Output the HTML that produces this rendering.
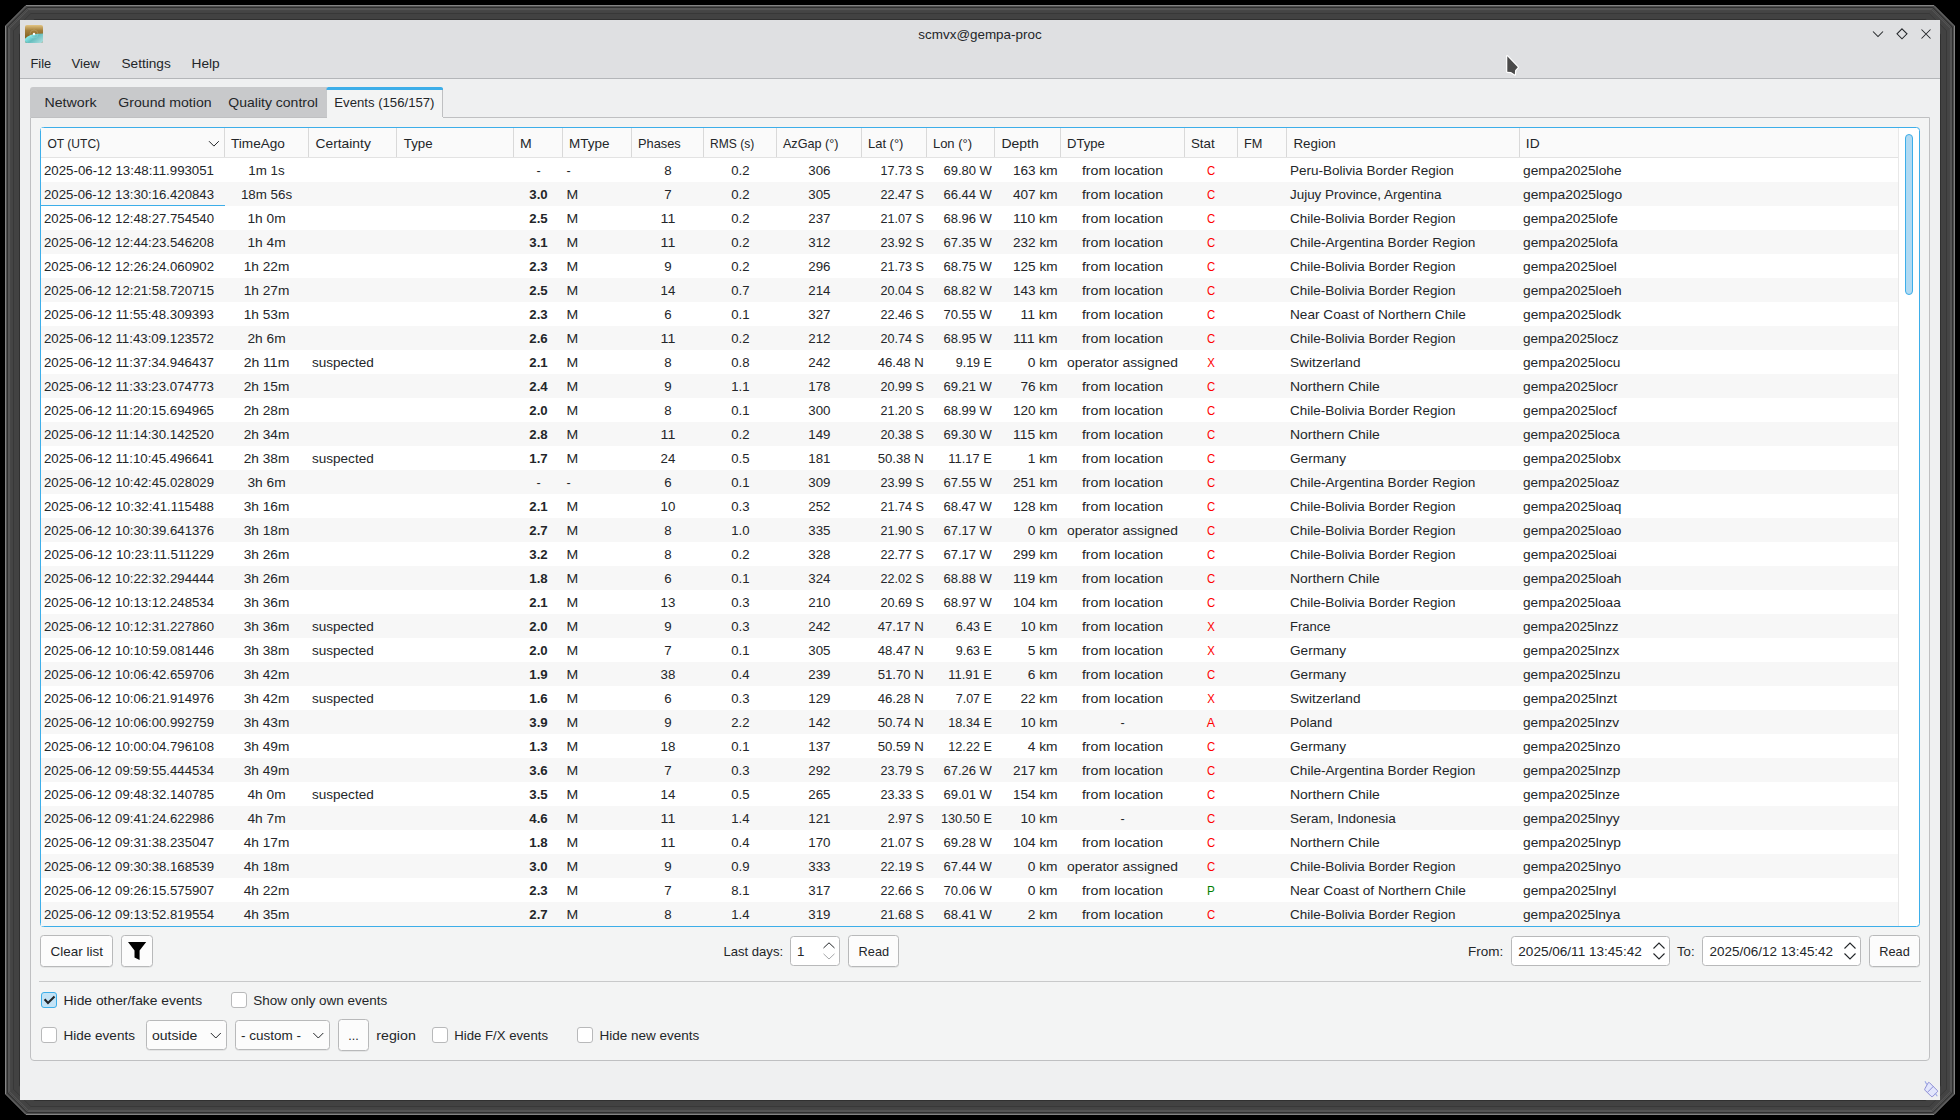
<!DOCTYPE html>
<html><head><meta charset="utf-8"><title>scmvx@gempa-proc</title>
<style>
html,body{margin:0;padding:0;background:#000;width:1960px;height:1120px;overflow:hidden}
svg{display:block;font-family:"Liberation Sans",sans-serif;font-size:13.3px;fill:#232629}
</style></head><body>
<svg width="1960" height="1120" viewBox="0 0 1960 1120">
<path d="M5.5,26.00 L26.00,5.5 L1934.00,5.5 L1954.5,26.00 L1954.5,1094.00 L1934.00,1114.5 L26.00,1114.5 L5.5,1094.00 Z" fill="#424242" stroke="#848484" stroke-width="1"/>
<path d="M6.5,26.59 L26.59,6.5 L1933.41,6.5 L1953.5,26.59 L1953.5,1093.41 L1933.41,1113.5 L26.59,1113.5 L6.5,1093.41 Z" fill="none" stroke="#505050" stroke-width="1"/>
<path d="M7.5,27.18 L27.18,7.5 L1932.82,7.5 L1952.5,27.18 L1952.5,1092.82 L1932.82,1112.5 L27.18,1112.5 L7.5,1092.82 Z" fill="none" stroke="#303030" stroke-width="1"/>
<path d="M8.5,27.77 L27.77,8.5 L1932.23,8.5 L1951.5,27.77 L1951.5,1092.23 L1932.23,1111.5 L27.77,1111.5 L8.5,1092.23 Z" fill="none" stroke="#555555" stroke-width="1"/>
<path d="M9.5,28.36 L28.36,9.5 L1931.64,9.5 L1950.5,28.36 L1950.5,1091.64 L1931.64,1110.5 L28.36,1110.5 L9.5,1091.64 Z" fill="none" stroke="#555555" stroke-width="1"/>
<path d="M10.5,28.95 L28.95,10.5 L1931.05,10.5 L1949.5,28.95 L1949.5,1091.05 L1931.05,1109.5 L28.95,1109.5 L10.5,1091.05 Z" fill="none" stroke="#464646" stroke-width="1"/>
<path d="M11.5,29.54 L29.54,11.5 L1930.46,11.5 L1948.5,29.54 L1948.5,1090.46 L1930.46,1108.5 L29.54,1108.5 L11.5,1090.46 Z" fill="none" stroke="#454545" stroke-width="1"/>
<path d="M12.5,30.13 L30.13,12.5 L1929.87,12.5 L1947.5,30.13 L1947.5,1089.87 L1929.87,1107.5 L30.13,1107.5 L12.5,1089.87 Z" fill="none" stroke="#444444" stroke-width="1"/>
<path d="M13.5,30.72 L30.72,13.5 L1929.28,13.5 L1946.5,30.72 L1946.5,1089.28 L1929.28,1106.5 L30.72,1106.5 L13.5,1089.28 Z" fill="none" stroke="#383838" stroke-width="1"/>
<path d="M19.5,34.26 L34.26,19.5 L1925.74,19.5 L1940.5,34.26 L1940.5,1085.74 L1925.74,1100.5 L34.26,1100.5 L19.5,1085.74 Z" fill="none" stroke="#303030" stroke-width="1"/>
<rect x="20" y="20" width="1920" height="1080" fill="#eff0f1"/>
<rect x="20" y="20" width="1920" height="58" fill="#dfe0e2"/>
<line x1="20" y1="78.5" x2="1940" y2="78.5" stroke="#b4b6b9" stroke-width="1"/>
<defs>
<linearGradient id="ib" x1="0" y1="0" x2="0" y2="1"><stop offset="0" stop-color="#e2c484"/><stop offset="0.3" stop-color="#a4803c"/><stop offset="0.6" stop-color="#8a6828"/><stop offset="1" stop-color="#7a5a20"/></linearGradient>
<linearGradient id="it" x1="0" y1="0.3" x2="1" y2="1"><stop offset="0" stop-color="#96ffff"/><stop offset="0.45" stop-color="#66bebe"/><stop offset="1" stop-color="#b4e2e2"/></linearGradient>
<clipPath id="ic"><rect x="25" y="25" width="18" height="18" rx="2"/></clipPath>
</defs>
<g clip-path="url(#ic)"><rect x="25" y="25" width="18" height="18" fill="url(#ib)"/><path d="M25,38.8 C28,35.8 31,34.6 35,34.1 L43,33.4 L43,43 L25,43 Z" fill="url(#it)"/><circle cx="34" cy="34" r="4" fill="none" stroke="#ffffff" stroke-opacity="0.25" stroke-width="0.6"/><circle cx="34" cy="34" r="1.2" fill="#fff"/></g>
<text x="980.0" y="39" text-anchor="middle" textLength="123.3" lengthAdjust="spacingAndGlyphs">scmvx@gempa-proc</text>
<path d="M1873,31.5 L1878,36.5 L1883,31.5" fill="none" stroke="#232629" stroke-width="1.05"/>
<path d="M1902,28.8 L1907,33.8 L1902,38.8 L1897,33.8 Z" fill="none" stroke="#232629" stroke-width="1.05"/>
<path d="M1921.5,29.5 L1930.5,38.5 M1930.5,29.5 L1921.5,38.5" fill="none" stroke="#232629" stroke-width="1.05"/>
<text x="30.5" y="68" textLength="20.7" lengthAdjust="spacingAndGlyphs">File</text>
<text x="71.5" y="68" textLength="28.3" lengthAdjust="spacingAndGlyphs">View</text>
<text x="121.5" y="68" textLength="49.2" lengthAdjust="spacingAndGlyphs">Settings</text>
<text x="191.5" y="68" textLength="28.2" lengthAdjust="spacingAndGlyphs">Help</text>
<path d="M30,117 L30,90 Q30,87 33,87 L327,87 L327,117 Z" fill="#c8c9cb"/>
<path d="M30.5,117.5 L1929.5,117.5 L1929.5,1057 Q1929.5,1060.5 1926,1060.5 L34,1060.5 Q30.5,1060.5 30.5,1057 Z" fill="#f3f4f4" stroke="#bfc0c2" stroke-width="1"/>
<rect x="327" y="87" width="116" height="31" fill="#f3f4f4"/>
<line x1="442.5" y1="88" x2="442.5" y2="117" stroke="#bfc0c2" stroke-width="1"/>
<path d="M326.5,90 L326.5,89 Q326.5,87 328.5,87 L441,87 Q443,87 443,89 L443,90 Z" fill="#3daee9"/>
<text x="44.5" y="107" textLength="52.0" lengthAdjust="spacingAndGlyphs">Network</text>
<text x="118.3" y="107" textLength="93.3" lengthAdjust="spacingAndGlyphs">Ground motion</text>
<text x="228.3" y="107" textLength="89.6" lengthAdjust="spacingAndGlyphs">Quality control</text>
<text x="334.3" y="107" textLength="100.2" lengthAdjust="spacingAndGlyphs">Events (156/157)</text>
<rect x="40.5" y="127.5" width="1879" height="799" fill="#ffffff" stroke="#3daee9" stroke-width="1" rx="3"/>
<rect x="41" y="128" width="1857" height="29" fill="#fafafa"/>
<line x1="41" y1="157.5" x2="1898" y2="157.5" stroke="#e3e3e3" stroke-width="1"/>
<line x1="224.5" y1="128" x2="224.5" y2="157" stroke="#d9d9d9" stroke-width="1"/>
<line x1="308.5" y1="128" x2="308.5" y2="157" stroke="#d9d9d9" stroke-width="1"/>
<line x1="396.5" y1="128" x2="396.5" y2="157" stroke="#d9d9d9" stroke-width="1"/>
<line x1="513.5" y1="128" x2="513.5" y2="157" stroke="#d9d9d9" stroke-width="1"/>
<line x1="562.5" y1="128" x2="562.5" y2="157" stroke="#d9d9d9" stroke-width="1"/>
<line x1="631.5" y1="128" x2="631.5" y2="157" stroke="#d9d9d9" stroke-width="1"/>
<line x1="703.5" y1="128" x2="703.5" y2="157" stroke="#d9d9d9" stroke-width="1"/>
<line x1="776.5" y1="128" x2="776.5" y2="157" stroke="#d9d9d9" stroke-width="1"/>
<line x1="861.5" y1="128" x2="861.5" y2="157" stroke="#d9d9d9" stroke-width="1"/>
<line x1="926.5" y1="128" x2="926.5" y2="157" stroke="#d9d9d9" stroke-width="1"/>
<line x1="994.5" y1="128" x2="994.5" y2="157" stroke="#d9d9d9" stroke-width="1"/>
<line x1="1060.5" y1="128" x2="1060.5" y2="157" stroke="#d9d9d9" stroke-width="1"/>
<line x1="1184.5" y1="128" x2="1184.5" y2="157" stroke="#d9d9d9" stroke-width="1"/>
<line x1="1237.5" y1="128" x2="1237.5" y2="157" stroke="#d9d9d9" stroke-width="1"/>
<line x1="1286.5" y1="128" x2="1286.5" y2="157" stroke="#d9d9d9" stroke-width="1"/>
<line x1="1519.5" y1="128" x2="1519.5" y2="157" stroke="#d9d9d9" stroke-width="1"/>
<line x1="1898.5" y1="128" x2="1898.5" y2="926" stroke="#e8e8e8" stroke-width="1"/>
<text x="47.5" y="148" textLength="52.6" lengthAdjust="spacingAndGlyphs">OT (UTC)</text>
<text x="231.0" y="148" textLength="53.9" lengthAdjust="spacingAndGlyphs">TimeAgo</text>
<text x="315.5" y="148" textLength="55.3" lengthAdjust="spacingAndGlyphs">Certainty</text>
<text x="403.8" y="148" textLength="28.8" lengthAdjust="spacingAndGlyphs">Type</text>
<text x="520.0" y="148" textLength="11.7" lengthAdjust="spacingAndGlyphs">M</text>
<text x="569.0" y="148" textLength="40.5" lengthAdjust="spacingAndGlyphs">MType</text>
<text x="638.0" y="148" textLength="42.7" lengthAdjust="spacingAndGlyphs">Phases</text>
<text x="710.0" y="148" textLength="44.2" lengthAdjust="spacingAndGlyphs">RMS (s)</text>
<text x="782.9" y="148" textLength="55.6" lengthAdjust="spacingAndGlyphs">AzGap (°)</text>
<text x="868.0" y="148" textLength="35.4" lengthAdjust="spacingAndGlyphs">Lat (°)</text>
<text x="932.9" y="148" textLength="39.2" lengthAdjust="spacingAndGlyphs">Lon (°)</text>
<text x="1001.4" y="148" textLength="37.3" lengthAdjust="spacingAndGlyphs">Depth</text>
<text x="1067.0" y="148" textLength="37.8" lengthAdjust="spacingAndGlyphs">DType</text>
<text x="1190.9" y="148" textLength="23.7" lengthAdjust="spacingAndGlyphs">Stat</text>
<text x="1244.0" y="148" textLength="18.4" lengthAdjust="spacingAndGlyphs">FM</text>
<text x="1293.4" y="148" textLength="42.4" lengthAdjust="spacingAndGlyphs">Region</text>
<text x="1525.8" y="148" textLength="13.8" lengthAdjust="spacingAndGlyphs">ID</text>
<path d="M209,141.2 L213.9,146.1 L218.8,141.2" fill="none" stroke="#232629" stroke-width="1.0"/>
<rect x="41" y="182" width="1857" height="24" fill="#f7f7f7"/>
<rect x="41" y="230" width="1857" height="24" fill="#f7f7f7"/>
<rect x="41" y="278" width="1857" height="24" fill="#f7f7f7"/>
<rect x="41" y="326" width="1857" height="24" fill="#f7f7f7"/>
<rect x="41" y="374" width="1857" height="24" fill="#f7f7f7"/>
<rect x="41" y="422" width="1857" height="24" fill="#f7f7f7"/>
<rect x="41" y="470" width="1857" height="24" fill="#f7f7f7"/>
<rect x="41" y="518" width="1857" height="24" fill="#f7f7f7"/>
<rect x="41" y="566" width="1857" height="24" fill="#f7f7f7"/>
<rect x="41" y="614" width="1857" height="24" fill="#f7f7f7"/>
<rect x="41" y="662" width="1857" height="24" fill="#f7f7f7"/>
<rect x="41" y="710" width="1857" height="24" fill="#f7f7f7"/>
<rect x="41" y="758" width="1857" height="24" fill="#f7f7f7"/>
<rect x="41" y="806" width="1857" height="24" fill="#f7f7f7"/>
<rect x="41" y="854" width="1857" height="24" fill="#f7f7f7"/>
<rect x="41" y="902" width="1857" height="24" fill="#f7f7f7"/>
<text x="44.0" y="175" textLength="170.0" lengthAdjust="spacingAndGlyphs">2025-06-12 13:48:11.993051</text>
<text x="266.5" y="175" text-anchor="middle" textLength="36.4" lengthAdjust="spacingAndGlyphs">1m 1s</text>
<text x="538.5" y="175" text-anchor="middle" textLength="4.2" lengthAdjust="spacingAndGlyphs">-</text>
<text x="566.5" y="175" textLength="4.2" lengthAdjust="spacingAndGlyphs">-</text>
<text x="668.0" y="175" text-anchor="middle" textLength="7.4" lengthAdjust="spacingAndGlyphs">8</text>
<text x="740.4" y="175" text-anchor="middle" textLength="18.3" lengthAdjust="spacingAndGlyphs">0.2</text>
<text x="819.4" y="175" text-anchor="middle" textLength="22.2" lengthAdjust="spacingAndGlyphs">306</text>
<text x="923.9" y="175" text-anchor="end" textLength="43.5" lengthAdjust="spacingAndGlyphs">17.73 S</text>
<text x="991.9" y="175" text-anchor="end" textLength="48.4" lengthAdjust="spacingAndGlyphs">69.80 W</text>
<text x="1057.5" y="175" text-anchor="end" textLength="44.5" lengthAdjust="spacingAndGlyphs">163 km</text>
<text x="1122.5" y="175" text-anchor="middle" textLength="81.2" lengthAdjust="spacingAndGlyphs">from location</text>
<text x="1211.0" y="175" text-anchor="middle" fill="#ff0000" textLength="8.2" lengthAdjust="spacingAndGlyphs">C</text>
<text x="1290.0" y="175" textLength="163.7" lengthAdjust="spacingAndGlyphs">Peru-Bolivia Border Region</text>
<text x="1523.0" y="175" textLength="98.6" lengthAdjust="spacingAndGlyphs">gempa2025lohe</text>
<text x="44.0" y="199" textLength="170.0" lengthAdjust="spacingAndGlyphs">2025-06-12 13:30:16.420843</text>
<text x="266.5" y="199" text-anchor="middle" textLength="51.2" lengthAdjust="spacingAndGlyphs">18m 56s</text>
<text x="538.5" y="199" text-anchor="middle" font-weight="bold" textLength="18.4" lengthAdjust="spacingAndGlyphs">3.0</text>
<text x="566.5" y="199" textLength="11.7" lengthAdjust="spacingAndGlyphs">M</text>
<text x="668.0" y="199" text-anchor="middle" textLength="7.4" lengthAdjust="spacingAndGlyphs">7</text>
<text x="740.4" y="199" text-anchor="middle" textLength="18.3" lengthAdjust="spacingAndGlyphs">0.2</text>
<text x="819.4" y="199" text-anchor="middle" textLength="22.2" lengthAdjust="spacingAndGlyphs">305</text>
<text x="923.9" y="199" text-anchor="end" textLength="43.5" lengthAdjust="spacingAndGlyphs">22.47 S</text>
<text x="991.9" y="199" text-anchor="end" textLength="48.4" lengthAdjust="spacingAndGlyphs">66.44 W</text>
<text x="1057.5" y="199" text-anchor="end" textLength="44.5" lengthAdjust="spacingAndGlyphs">407 km</text>
<text x="1122.5" y="199" text-anchor="middle" textLength="81.2" lengthAdjust="spacingAndGlyphs">from location</text>
<text x="1211.0" y="199" text-anchor="middle" fill="#ff0000" textLength="8.2" lengthAdjust="spacingAndGlyphs">C</text>
<text x="1290.0" y="199" textLength="151.4" lengthAdjust="spacingAndGlyphs">Jujuy Province, Argentina</text>
<text x="1523.0" y="199" textLength="99.1" lengthAdjust="spacingAndGlyphs">gempa2025logo</text>
<text x="44.0" y="223" textLength="170.0" lengthAdjust="spacingAndGlyphs">2025-06-12 12:48:27.754540</text>
<text x="266.5" y="223" text-anchor="middle" textLength="38.2" lengthAdjust="spacingAndGlyphs">1h 0m</text>
<text x="538.5" y="223" text-anchor="middle" font-weight="bold" textLength="18.4" lengthAdjust="spacingAndGlyphs">2.5</text>
<text x="566.5" y="223" textLength="11.7" lengthAdjust="spacingAndGlyphs">M</text>
<text x="668.0" y="223" text-anchor="middle" textLength="14.8" lengthAdjust="spacingAndGlyphs">11</text>
<text x="740.4" y="223" text-anchor="middle" textLength="18.3" lengthAdjust="spacingAndGlyphs">0.2</text>
<text x="819.4" y="223" text-anchor="middle" textLength="22.2" lengthAdjust="spacingAndGlyphs">237</text>
<text x="923.9" y="223" text-anchor="end" textLength="43.5" lengthAdjust="spacingAndGlyphs">21.07 S</text>
<text x="991.9" y="223" text-anchor="end" textLength="48.4" lengthAdjust="spacingAndGlyphs">68.96 W</text>
<text x="1057.5" y="223" text-anchor="end" textLength="44.5" lengthAdjust="spacingAndGlyphs">110 km</text>
<text x="1122.5" y="223" text-anchor="middle" textLength="81.2" lengthAdjust="spacingAndGlyphs">from location</text>
<text x="1211.0" y="223" text-anchor="middle" fill="#ff0000" textLength="8.2" lengthAdjust="spacingAndGlyphs">C</text>
<text x="1290.0" y="223" textLength="165.4" lengthAdjust="spacingAndGlyphs">Chile-Bolivia Border Region</text>
<text x="1523.0" y="223" textLength="95.0" lengthAdjust="spacingAndGlyphs">gempa2025lofe</text>
<text x="44.0" y="247" textLength="170.0" lengthAdjust="spacingAndGlyphs">2025-06-12 12:44:23.546208</text>
<text x="266.5" y="247" text-anchor="middle" textLength="38.2" lengthAdjust="spacingAndGlyphs">1h 4m</text>
<text x="538.5" y="247" text-anchor="middle" font-weight="bold" textLength="18.4" lengthAdjust="spacingAndGlyphs">3.1</text>
<text x="566.5" y="247" textLength="11.7" lengthAdjust="spacingAndGlyphs">M</text>
<text x="668.0" y="247" text-anchor="middle" textLength="14.8" lengthAdjust="spacingAndGlyphs">11</text>
<text x="740.4" y="247" text-anchor="middle" textLength="18.3" lengthAdjust="spacingAndGlyphs">0.2</text>
<text x="819.4" y="247" text-anchor="middle" textLength="22.2" lengthAdjust="spacingAndGlyphs">312</text>
<text x="923.9" y="247" text-anchor="end" textLength="43.5" lengthAdjust="spacingAndGlyphs">23.92 S</text>
<text x="991.9" y="247" text-anchor="end" textLength="48.4" lengthAdjust="spacingAndGlyphs">67.35 W</text>
<text x="1057.5" y="247" text-anchor="end" textLength="44.5" lengthAdjust="spacingAndGlyphs">232 km</text>
<text x="1122.5" y="247" text-anchor="middle" textLength="81.2" lengthAdjust="spacingAndGlyphs">from location</text>
<text x="1211.0" y="247" text-anchor="middle" fill="#ff0000" textLength="8.2" lengthAdjust="spacingAndGlyphs">C</text>
<text x="1290.0" y="247" textLength="185.3" lengthAdjust="spacingAndGlyphs">Chile-Argentina Border Region</text>
<text x="1523.0" y="247" textLength="95.0" lengthAdjust="spacingAndGlyphs">gempa2025lofa</text>
<text x="44.0" y="271" textLength="170.0" lengthAdjust="spacingAndGlyphs">2025-06-12 12:26:24.060902</text>
<text x="266.5" y="271" text-anchor="middle" textLength="45.6" lengthAdjust="spacingAndGlyphs">1h 22m</text>
<text x="538.5" y="271" text-anchor="middle" font-weight="bold" textLength="18.4" lengthAdjust="spacingAndGlyphs">2.3</text>
<text x="566.5" y="271" textLength="11.7" lengthAdjust="spacingAndGlyphs">M</text>
<text x="668.0" y="271" text-anchor="middle" textLength="7.4" lengthAdjust="spacingAndGlyphs">9</text>
<text x="740.4" y="271" text-anchor="middle" textLength="18.3" lengthAdjust="spacingAndGlyphs">0.2</text>
<text x="819.4" y="271" text-anchor="middle" textLength="22.2" lengthAdjust="spacingAndGlyphs">296</text>
<text x="923.9" y="271" text-anchor="end" textLength="43.5" lengthAdjust="spacingAndGlyphs">21.73 S</text>
<text x="991.9" y="271" text-anchor="end" textLength="48.4" lengthAdjust="spacingAndGlyphs">68.75 W</text>
<text x="1057.5" y="271" text-anchor="end" textLength="44.5" lengthAdjust="spacingAndGlyphs">125 km</text>
<text x="1122.5" y="271" text-anchor="middle" textLength="81.2" lengthAdjust="spacingAndGlyphs">from location</text>
<text x="1211.0" y="271" text-anchor="middle" fill="#ff0000" textLength="8.2" lengthAdjust="spacingAndGlyphs">C</text>
<text x="1290.0" y="271" textLength="165.4" lengthAdjust="spacingAndGlyphs">Chile-Bolivia Border Region</text>
<text x="1523.0" y="271" textLength="93.9" lengthAdjust="spacingAndGlyphs">gempa2025loel</text>
<text x="44.0" y="295" textLength="170.0" lengthAdjust="spacingAndGlyphs">2025-06-12 12:21:58.720715</text>
<text x="266.5" y="295" text-anchor="middle" textLength="45.6" lengthAdjust="spacingAndGlyphs">1h 27m</text>
<text x="538.5" y="295" text-anchor="middle" font-weight="bold" textLength="18.4" lengthAdjust="spacingAndGlyphs">2.5</text>
<text x="566.5" y="295" textLength="11.7" lengthAdjust="spacingAndGlyphs">M</text>
<text x="668.0" y="295" text-anchor="middle" textLength="14.8" lengthAdjust="spacingAndGlyphs">14</text>
<text x="740.4" y="295" text-anchor="middle" textLength="18.3" lengthAdjust="spacingAndGlyphs">0.7</text>
<text x="819.4" y="295" text-anchor="middle" textLength="22.2" lengthAdjust="spacingAndGlyphs">214</text>
<text x="923.9" y="295" text-anchor="end" textLength="43.5" lengthAdjust="spacingAndGlyphs">20.04 S</text>
<text x="991.9" y="295" text-anchor="end" textLength="48.4" lengthAdjust="spacingAndGlyphs">68.82 W</text>
<text x="1057.5" y="295" text-anchor="end" textLength="44.5" lengthAdjust="spacingAndGlyphs">143 km</text>
<text x="1122.5" y="295" text-anchor="middle" textLength="81.2" lengthAdjust="spacingAndGlyphs">from location</text>
<text x="1211.0" y="295" text-anchor="middle" fill="#ff0000" textLength="8.2" lengthAdjust="spacingAndGlyphs">C</text>
<text x="1290.0" y="295" textLength="165.4" lengthAdjust="spacingAndGlyphs">Chile-Bolivia Border Region</text>
<text x="1523.0" y="295" textLength="98.6" lengthAdjust="spacingAndGlyphs">gempa2025loeh</text>
<text x="44.0" y="319" textLength="170.0" lengthAdjust="spacingAndGlyphs">2025-06-12 11:55:48.309393</text>
<text x="266.5" y="319" text-anchor="middle" textLength="45.6" lengthAdjust="spacingAndGlyphs">1h 53m</text>
<text x="538.5" y="319" text-anchor="middle" font-weight="bold" textLength="18.4" lengthAdjust="spacingAndGlyphs">2.3</text>
<text x="566.5" y="319" textLength="11.7" lengthAdjust="spacingAndGlyphs">M</text>
<text x="668.0" y="319" text-anchor="middle" textLength="7.4" lengthAdjust="spacingAndGlyphs">6</text>
<text x="740.4" y="319" text-anchor="middle" textLength="18.3" lengthAdjust="spacingAndGlyphs">0.1</text>
<text x="819.4" y="319" text-anchor="middle" textLength="22.2" lengthAdjust="spacingAndGlyphs">327</text>
<text x="923.9" y="319" text-anchor="end" textLength="43.5" lengthAdjust="spacingAndGlyphs">22.46 S</text>
<text x="991.9" y="319" text-anchor="end" textLength="48.4" lengthAdjust="spacingAndGlyphs">70.55 W</text>
<text x="1057.5" y="319" text-anchor="end" textLength="37.1" lengthAdjust="spacingAndGlyphs">11 km</text>
<text x="1122.5" y="319" text-anchor="middle" textLength="81.2" lengthAdjust="spacingAndGlyphs">from location</text>
<text x="1211.0" y="319" text-anchor="middle" fill="#ff0000" textLength="8.2" lengthAdjust="spacingAndGlyphs">C</text>
<text x="1290.0" y="319" textLength="175.9" lengthAdjust="spacingAndGlyphs">Near Coast of Northern Chile</text>
<text x="1523.0" y="319" textLength="98.1" lengthAdjust="spacingAndGlyphs">gempa2025lodk</text>
<text x="44.0" y="343" textLength="170.0" lengthAdjust="spacingAndGlyphs">2025-06-12 11:43:09.123572</text>
<text x="266.5" y="343" text-anchor="middle" textLength="38.2" lengthAdjust="spacingAndGlyphs">2h 6m</text>
<text x="538.5" y="343" text-anchor="middle" font-weight="bold" textLength="18.4" lengthAdjust="spacingAndGlyphs">2.6</text>
<text x="566.5" y="343" textLength="11.7" lengthAdjust="spacingAndGlyphs">M</text>
<text x="668.0" y="343" text-anchor="middle" textLength="14.8" lengthAdjust="spacingAndGlyphs">11</text>
<text x="740.4" y="343" text-anchor="middle" textLength="18.3" lengthAdjust="spacingAndGlyphs">0.2</text>
<text x="819.4" y="343" text-anchor="middle" textLength="22.2" lengthAdjust="spacingAndGlyphs">212</text>
<text x="923.9" y="343" text-anchor="end" textLength="43.5" lengthAdjust="spacingAndGlyphs">20.74 S</text>
<text x="991.9" y="343" text-anchor="end" textLength="48.4" lengthAdjust="spacingAndGlyphs">68.95 W</text>
<text x="1057.5" y="343" text-anchor="end" textLength="44.5" lengthAdjust="spacingAndGlyphs">111 km</text>
<text x="1122.5" y="343" text-anchor="middle" textLength="81.2" lengthAdjust="spacingAndGlyphs">from location</text>
<text x="1211.0" y="343" text-anchor="middle" fill="#ff0000" textLength="8.2" lengthAdjust="spacingAndGlyphs">C</text>
<text x="1290.0" y="343" textLength="165.4" lengthAdjust="spacingAndGlyphs">Chile-Bolivia Border Region</text>
<text x="1523.0" y="343" textLength="95.6" lengthAdjust="spacingAndGlyphs">gempa2025locz</text>
<text x="44.0" y="367" textLength="170.0" lengthAdjust="spacingAndGlyphs">2025-06-12 11:37:34.946437</text>
<text x="266.5" y="367" text-anchor="middle" textLength="45.6" lengthAdjust="spacingAndGlyphs">2h 11m</text>
<text x="312.0" y="367" textLength="61.7" lengthAdjust="spacingAndGlyphs">suspected</text>
<text x="538.5" y="367" text-anchor="middle" font-weight="bold" textLength="18.4" lengthAdjust="spacingAndGlyphs">2.1</text>
<text x="566.5" y="367" textLength="11.7" lengthAdjust="spacingAndGlyphs">M</text>
<text x="668.0" y="367" text-anchor="middle" textLength="7.4" lengthAdjust="spacingAndGlyphs">8</text>
<text x="740.4" y="367" text-anchor="middle" textLength="18.3" lengthAdjust="spacingAndGlyphs">0.8</text>
<text x="819.4" y="367" text-anchor="middle" textLength="22.2" lengthAdjust="spacingAndGlyphs">242</text>
<text x="923.9" y="367" text-anchor="end" textLength="46.2" lengthAdjust="spacingAndGlyphs">46.48 N</text>
<text x="991.9" y="367" text-anchor="end" textLength="36.2" lengthAdjust="spacingAndGlyphs">9.19 E</text>
<text x="1057.5" y="367" text-anchor="end" textLength="29.8" lengthAdjust="spacingAndGlyphs">0 km</text>
<text x="1122.5" y="367" text-anchor="middle" textLength="110.8" lengthAdjust="spacingAndGlyphs">operator assigned</text>
<text x="1211.0" y="367" text-anchor="middle" fill="#ff0000" textLength="7.6" lengthAdjust="spacingAndGlyphs">X</text>
<text x="1290.0" y="367" textLength="70.5" lengthAdjust="spacingAndGlyphs">Switzerland</text>
<text x="1523.0" y="367" textLength="97.5" lengthAdjust="spacingAndGlyphs">gempa2025locu</text>
<text x="44.0" y="391" textLength="170.0" lengthAdjust="spacingAndGlyphs">2025-06-12 11:33:23.074773</text>
<text x="266.5" y="391" text-anchor="middle" textLength="45.6" lengthAdjust="spacingAndGlyphs">2h 15m</text>
<text x="538.5" y="391" text-anchor="middle" font-weight="bold" textLength="18.4" lengthAdjust="spacingAndGlyphs">2.4</text>
<text x="566.5" y="391" textLength="11.7" lengthAdjust="spacingAndGlyphs">M</text>
<text x="668.0" y="391" text-anchor="middle" textLength="7.4" lengthAdjust="spacingAndGlyphs">9</text>
<text x="740.4" y="391" text-anchor="middle" textLength="18.3" lengthAdjust="spacingAndGlyphs">1.1</text>
<text x="819.4" y="391" text-anchor="middle" textLength="22.2" lengthAdjust="spacingAndGlyphs">178</text>
<text x="923.9" y="391" text-anchor="end" textLength="43.5" lengthAdjust="spacingAndGlyphs">20.99 S</text>
<text x="991.9" y="391" text-anchor="end" textLength="48.4" lengthAdjust="spacingAndGlyphs">69.21 W</text>
<text x="1057.5" y="391" text-anchor="end" textLength="37.1" lengthAdjust="spacingAndGlyphs">76 km</text>
<text x="1122.5" y="391" text-anchor="middle" textLength="81.2" lengthAdjust="spacingAndGlyphs">from location</text>
<text x="1211.0" y="391" text-anchor="middle" fill="#ff0000" textLength="8.2" lengthAdjust="spacingAndGlyphs">C</text>
<text x="1290.0" y="391" textLength="89.8" lengthAdjust="spacingAndGlyphs">Northern Chile</text>
<text x="1523.0" y="391" textLength="94.8" lengthAdjust="spacingAndGlyphs">gempa2025locr</text>
<text x="44.0" y="415" textLength="170.0" lengthAdjust="spacingAndGlyphs">2025-06-12 11:20:15.694965</text>
<text x="266.5" y="415" text-anchor="middle" textLength="45.6" lengthAdjust="spacingAndGlyphs">2h 28m</text>
<text x="538.5" y="415" text-anchor="middle" font-weight="bold" textLength="18.4" lengthAdjust="spacingAndGlyphs">2.0</text>
<text x="566.5" y="415" textLength="11.7" lengthAdjust="spacingAndGlyphs">M</text>
<text x="668.0" y="415" text-anchor="middle" textLength="7.4" lengthAdjust="spacingAndGlyphs">8</text>
<text x="740.4" y="415" text-anchor="middle" textLength="18.3" lengthAdjust="spacingAndGlyphs">0.1</text>
<text x="819.4" y="415" text-anchor="middle" textLength="22.2" lengthAdjust="spacingAndGlyphs">300</text>
<text x="923.9" y="415" text-anchor="end" textLength="43.5" lengthAdjust="spacingAndGlyphs">21.20 S</text>
<text x="991.9" y="415" text-anchor="end" textLength="48.4" lengthAdjust="spacingAndGlyphs">68.99 W</text>
<text x="1057.5" y="415" text-anchor="end" textLength="44.5" lengthAdjust="spacingAndGlyphs">120 km</text>
<text x="1122.5" y="415" text-anchor="middle" textLength="81.2" lengthAdjust="spacingAndGlyphs">from location</text>
<text x="1211.0" y="415" text-anchor="middle" fill="#ff0000" textLength="8.2" lengthAdjust="spacingAndGlyphs">C</text>
<text x="1290.0" y="415" textLength="165.4" lengthAdjust="spacingAndGlyphs">Chile-Bolivia Border Region</text>
<text x="1523.0" y="415" textLength="93.9" lengthAdjust="spacingAndGlyphs">gempa2025locf</text>
<text x="44.0" y="439" textLength="170.0" lengthAdjust="spacingAndGlyphs">2025-06-12 11:14:30.142520</text>
<text x="266.5" y="439" text-anchor="middle" textLength="45.6" lengthAdjust="spacingAndGlyphs">2h 34m</text>
<text x="538.5" y="439" text-anchor="middle" font-weight="bold" textLength="18.4" lengthAdjust="spacingAndGlyphs">2.8</text>
<text x="566.5" y="439" textLength="11.7" lengthAdjust="spacingAndGlyphs">M</text>
<text x="668.0" y="439" text-anchor="middle" textLength="14.8" lengthAdjust="spacingAndGlyphs">11</text>
<text x="740.4" y="439" text-anchor="middle" textLength="18.3" lengthAdjust="spacingAndGlyphs">0.2</text>
<text x="819.4" y="439" text-anchor="middle" textLength="22.2" lengthAdjust="spacingAndGlyphs">149</text>
<text x="923.9" y="439" text-anchor="end" textLength="43.5" lengthAdjust="spacingAndGlyphs">20.38 S</text>
<text x="991.9" y="439" text-anchor="end" textLength="48.4" lengthAdjust="spacingAndGlyphs">69.30 W</text>
<text x="1057.5" y="439" text-anchor="end" textLength="44.5" lengthAdjust="spacingAndGlyphs">115 km</text>
<text x="1122.5" y="439" text-anchor="middle" textLength="81.2" lengthAdjust="spacingAndGlyphs">from location</text>
<text x="1211.0" y="439" text-anchor="middle" fill="#ff0000" textLength="8.2" lengthAdjust="spacingAndGlyphs">C</text>
<text x="1290.0" y="439" textLength="89.8" lengthAdjust="spacingAndGlyphs">Northern Chile</text>
<text x="1523.0" y="439" textLength="96.7" lengthAdjust="spacingAndGlyphs">gempa2025loca</text>
<text x="44.0" y="463" textLength="170.0" lengthAdjust="spacingAndGlyphs">2025-06-12 11:10:45.496641</text>
<text x="266.5" y="463" text-anchor="middle" textLength="45.6" lengthAdjust="spacingAndGlyphs">2h 38m</text>
<text x="312.0" y="463" textLength="61.7" lengthAdjust="spacingAndGlyphs">suspected</text>
<text x="538.5" y="463" text-anchor="middle" font-weight="bold" textLength="18.4" lengthAdjust="spacingAndGlyphs">1.7</text>
<text x="566.5" y="463" textLength="11.7" lengthAdjust="spacingAndGlyphs">M</text>
<text x="668.0" y="463" text-anchor="middle" textLength="14.8" lengthAdjust="spacingAndGlyphs">24</text>
<text x="740.4" y="463" text-anchor="middle" textLength="18.3" lengthAdjust="spacingAndGlyphs">0.5</text>
<text x="819.4" y="463" text-anchor="middle" textLength="22.2" lengthAdjust="spacingAndGlyphs">181</text>
<text x="923.9" y="463" text-anchor="end" textLength="46.2" lengthAdjust="spacingAndGlyphs">50.38 N</text>
<text x="991.9" y="463" text-anchor="end" textLength="43.6" lengthAdjust="spacingAndGlyphs">11.17 E</text>
<text x="1057.5" y="463" text-anchor="end" textLength="29.8" lengthAdjust="spacingAndGlyphs">1 km</text>
<text x="1122.5" y="463" text-anchor="middle" textLength="81.2" lengthAdjust="spacingAndGlyphs">from location</text>
<text x="1211.0" y="463" text-anchor="middle" fill="#ff0000" textLength="8.2" lengthAdjust="spacingAndGlyphs">C</text>
<text x="1290.0" y="463" textLength="56.0" lengthAdjust="spacingAndGlyphs">Germany</text>
<text x="1523.0" y="463" textLength="97.8" lengthAdjust="spacingAndGlyphs">gempa2025lobx</text>
<text x="44.0" y="487" textLength="170.0" lengthAdjust="spacingAndGlyphs">2025-06-12 10:42:45.028029</text>
<text x="266.5" y="487" text-anchor="middle" textLength="38.2" lengthAdjust="spacingAndGlyphs">3h 6m</text>
<text x="538.5" y="487" text-anchor="middle" textLength="4.2" lengthAdjust="spacingAndGlyphs">-</text>
<text x="566.5" y="487" textLength="4.2" lengthAdjust="spacingAndGlyphs">-</text>
<text x="668.0" y="487" text-anchor="middle" textLength="7.4" lengthAdjust="spacingAndGlyphs">6</text>
<text x="740.4" y="487" text-anchor="middle" textLength="18.3" lengthAdjust="spacingAndGlyphs">0.1</text>
<text x="819.4" y="487" text-anchor="middle" textLength="22.2" lengthAdjust="spacingAndGlyphs">309</text>
<text x="923.9" y="487" text-anchor="end" textLength="43.5" lengthAdjust="spacingAndGlyphs">23.99 S</text>
<text x="991.9" y="487" text-anchor="end" textLength="48.4" lengthAdjust="spacingAndGlyphs">67.55 W</text>
<text x="1057.5" y="487" text-anchor="end" textLength="44.5" lengthAdjust="spacingAndGlyphs">251 km</text>
<text x="1122.5" y="487" text-anchor="middle" textLength="81.2" lengthAdjust="spacingAndGlyphs">from location</text>
<text x="1211.0" y="487" text-anchor="middle" fill="#ff0000" textLength="8.2" lengthAdjust="spacingAndGlyphs">C</text>
<text x="1290.0" y="487" textLength="185.3" lengthAdjust="spacingAndGlyphs">Chile-Argentina Border Region</text>
<text x="1523.0" y="487" textLength="96.6" lengthAdjust="spacingAndGlyphs">gempa2025loaz</text>
<text x="44.0" y="511" textLength="170.0" lengthAdjust="spacingAndGlyphs">2025-06-12 10:32:41.115488</text>
<text x="266.5" y="511" text-anchor="middle" textLength="45.6" lengthAdjust="spacingAndGlyphs">3h 16m</text>
<text x="538.5" y="511" text-anchor="middle" font-weight="bold" textLength="18.4" lengthAdjust="spacingAndGlyphs">2.1</text>
<text x="566.5" y="511" textLength="11.7" lengthAdjust="spacingAndGlyphs">M</text>
<text x="668.0" y="511" text-anchor="middle" textLength="14.8" lengthAdjust="spacingAndGlyphs">10</text>
<text x="740.4" y="511" text-anchor="middle" textLength="18.3" lengthAdjust="spacingAndGlyphs">0.3</text>
<text x="819.4" y="511" text-anchor="middle" textLength="22.2" lengthAdjust="spacingAndGlyphs">252</text>
<text x="923.9" y="511" text-anchor="end" textLength="43.5" lengthAdjust="spacingAndGlyphs">21.74 S</text>
<text x="991.9" y="511" text-anchor="end" textLength="48.4" lengthAdjust="spacingAndGlyphs">68.47 W</text>
<text x="1057.5" y="511" text-anchor="end" textLength="44.5" lengthAdjust="spacingAndGlyphs">128 km</text>
<text x="1122.5" y="511" text-anchor="middle" textLength="81.2" lengthAdjust="spacingAndGlyphs">from location</text>
<text x="1211.0" y="511" text-anchor="middle" fill="#ff0000" textLength="8.2" lengthAdjust="spacingAndGlyphs">C</text>
<text x="1290.0" y="511" textLength="165.4" lengthAdjust="spacingAndGlyphs">Chile-Bolivia Border Region</text>
<text x="1523.0" y="511" textLength="98.5" lengthAdjust="spacingAndGlyphs">gempa2025loaq</text>
<text x="44.0" y="535" textLength="170.0" lengthAdjust="spacingAndGlyphs">2025-06-12 10:30:39.641376</text>
<text x="266.5" y="535" text-anchor="middle" textLength="45.6" lengthAdjust="spacingAndGlyphs">3h 18m</text>
<text x="538.5" y="535" text-anchor="middle" font-weight="bold" textLength="18.4" lengthAdjust="spacingAndGlyphs">2.7</text>
<text x="566.5" y="535" textLength="11.7" lengthAdjust="spacingAndGlyphs">M</text>
<text x="668.0" y="535" text-anchor="middle" textLength="7.4" lengthAdjust="spacingAndGlyphs">8</text>
<text x="740.4" y="535" text-anchor="middle" textLength="18.3" lengthAdjust="spacingAndGlyphs">1.0</text>
<text x="819.4" y="535" text-anchor="middle" textLength="22.2" lengthAdjust="spacingAndGlyphs">335</text>
<text x="923.9" y="535" text-anchor="end" textLength="43.5" lengthAdjust="spacingAndGlyphs">21.90 S</text>
<text x="991.9" y="535" text-anchor="end" textLength="48.4" lengthAdjust="spacingAndGlyphs">67.17 W</text>
<text x="1057.5" y="535" text-anchor="end" textLength="29.8" lengthAdjust="spacingAndGlyphs">0 km</text>
<text x="1122.5" y="535" text-anchor="middle" textLength="110.8" lengthAdjust="spacingAndGlyphs">operator assigned</text>
<text x="1211.0" y="535" text-anchor="middle" fill="#ff0000" textLength="8.2" lengthAdjust="spacingAndGlyphs">C</text>
<text x="1290.0" y="535" textLength="165.4" lengthAdjust="spacingAndGlyphs">Chile-Bolivia Border Region</text>
<text x="1523.0" y="535" textLength="98.4" lengthAdjust="spacingAndGlyphs">gempa2025loao</text>
<text x="44.0" y="559" textLength="170.0" lengthAdjust="spacingAndGlyphs">2025-06-12 10:23:11.511229</text>
<text x="266.5" y="559" text-anchor="middle" textLength="45.6" lengthAdjust="spacingAndGlyphs">3h 26m</text>
<text x="538.5" y="559" text-anchor="middle" font-weight="bold" textLength="18.4" lengthAdjust="spacingAndGlyphs">3.2</text>
<text x="566.5" y="559" textLength="11.7" lengthAdjust="spacingAndGlyphs">M</text>
<text x="668.0" y="559" text-anchor="middle" textLength="7.4" lengthAdjust="spacingAndGlyphs">8</text>
<text x="740.4" y="559" text-anchor="middle" textLength="18.3" lengthAdjust="spacingAndGlyphs">0.2</text>
<text x="819.4" y="559" text-anchor="middle" textLength="22.2" lengthAdjust="spacingAndGlyphs">328</text>
<text x="923.9" y="559" text-anchor="end" textLength="43.5" lengthAdjust="spacingAndGlyphs">22.77 S</text>
<text x="991.9" y="559" text-anchor="end" textLength="48.4" lengthAdjust="spacingAndGlyphs">67.17 W</text>
<text x="1057.5" y="559" text-anchor="end" textLength="44.5" lengthAdjust="spacingAndGlyphs">299 km</text>
<text x="1122.5" y="559" text-anchor="middle" textLength="81.2" lengthAdjust="spacingAndGlyphs">from location</text>
<text x="1211.0" y="559" text-anchor="middle" fill="#ff0000" textLength="8.2" lengthAdjust="spacingAndGlyphs">C</text>
<text x="1290.0" y="559" textLength="165.4" lengthAdjust="spacingAndGlyphs">Chile-Bolivia Border Region</text>
<text x="1523.0" y="559" textLength="93.9" lengthAdjust="spacingAndGlyphs">gempa2025loai</text>
<text x="44.0" y="583" textLength="170.0" lengthAdjust="spacingAndGlyphs">2025-06-12 10:22:32.294444</text>
<text x="266.5" y="583" text-anchor="middle" textLength="45.6" lengthAdjust="spacingAndGlyphs">3h 26m</text>
<text x="538.5" y="583" text-anchor="middle" font-weight="bold" textLength="18.4" lengthAdjust="spacingAndGlyphs">1.8</text>
<text x="566.5" y="583" textLength="11.7" lengthAdjust="spacingAndGlyphs">M</text>
<text x="668.0" y="583" text-anchor="middle" textLength="7.4" lengthAdjust="spacingAndGlyphs">6</text>
<text x="740.4" y="583" text-anchor="middle" textLength="18.3" lengthAdjust="spacingAndGlyphs">0.1</text>
<text x="819.4" y="583" text-anchor="middle" textLength="22.2" lengthAdjust="spacingAndGlyphs">324</text>
<text x="923.9" y="583" text-anchor="end" textLength="43.5" lengthAdjust="spacingAndGlyphs">22.02 S</text>
<text x="991.9" y="583" text-anchor="end" textLength="48.4" lengthAdjust="spacingAndGlyphs">68.88 W</text>
<text x="1057.5" y="583" text-anchor="end" textLength="44.5" lengthAdjust="spacingAndGlyphs">119 km</text>
<text x="1122.5" y="583" text-anchor="middle" textLength="81.2" lengthAdjust="spacingAndGlyphs">from location</text>
<text x="1211.0" y="583" text-anchor="middle" fill="#ff0000" textLength="8.2" lengthAdjust="spacingAndGlyphs">C</text>
<text x="1290.0" y="583" textLength="89.8" lengthAdjust="spacingAndGlyphs">Northern Chile</text>
<text x="1523.0" y="583" textLength="98.5" lengthAdjust="spacingAndGlyphs">gempa2025loah</text>
<text x="44.0" y="607" textLength="170.0" lengthAdjust="spacingAndGlyphs">2025-06-12 10:13:12.248534</text>
<text x="266.5" y="607" text-anchor="middle" textLength="45.6" lengthAdjust="spacingAndGlyphs">3h 36m</text>
<text x="538.5" y="607" text-anchor="middle" font-weight="bold" textLength="18.4" lengthAdjust="spacingAndGlyphs">2.1</text>
<text x="566.5" y="607" textLength="11.7" lengthAdjust="spacingAndGlyphs">M</text>
<text x="668.0" y="607" text-anchor="middle" textLength="14.8" lengthAdjust="spacingAndGlyphs">13</text>
<text x="740.4" y="607" text-anchor="middle" textLength="18.3" lengthAdjust="spacingAndGlyphs">0.3</text>
<text x="819.4" y="607" text-anchor="middle" textLength="22.2" lengthAdjust="spacingAndGlyphs">210</text>
<text x="923.9" y="607" text-anchor="end" textLength="43.5" lengthAdjust="spacingAndGlyphs">20.69 S</text>
<text x="991.9" y="607" text-anchor="end" textLength="48.4" lengthAdjust="spacingAndGlyphs">68.97 W</text>
<text x="1057.5" y="607" text-anchor="end" textLength="44.5" lengthAdjust="spacingAndGlyphs">104 km</text>
<text x="1122.5" y="607" text-anchor="middle" textLength="81.2" lengthAdjust="spacingAndGlyphs">from location</text>
<text x="1211.0" y="607" text-anchor="middle" fill="#ff0000" textLength="8.2" lengthAdjust="spacingAndGlyphs">C</text>
<text x="1290.0" y="607" textLength="165.4" lengthAdjust="spacingAndGlyphs">Chile-Bolivia Border Region</text>
<text x="1523.0" y="607" textLength="97.8" lengthAdjust="spacingAndGlyphs">gempa2025loaa</text>
<text x="44.0" y="631" textLength="170.0" lengthAdjust="spacingAndGlyphs">2025-06-12 10:12:31.227860</text>
<text x="266.5" y="631" text-anchor="middle" textLength="45.6" lengthAdjust="spacingAndGlyphs">3h 36m</text>
<text x="312.0" y="631" textLength="61.7" lengthAdjust="spacingAndGlyphs">suspected</text>
<text x="538.5" y="631" text-anchor="middle" font-weight="bold" textLength="18.4" lengthAdjust="spacingAndGlyphs">2.0</text>
<text x="566.5" y="631" textLength="11.7" lengthAdjust="spacingAndGlyphs">M</text>
<text x="668.0" y="631" text-anchor="middle" textLength="7.4" lengthAdjust="spacingAndGlyphs">9</text>
<text x="740.4" y="631" text-anchor="middle" textLength="18.3" lengthAdjust="spacingAndGlyphs">0.3</text>
<text x="819.4" y="631" text-anchor="middle" textLength="22.2" lengthAdjust="spacingAndGlyphs">242</text>
<text x="923.9" y="631" text-anchor="end" textLength="46.2" lengthAdjust="spacingAndGlyphs">47.17 N</text>
<text x="991.9" y="631" text-anchor="end" textLength="36.2" lengthAdjust="spacingAndGlyphs">6.43 E</text>
<text x="1057.5" y="631" text-anchor="end" textLength="37.1" lengthAdjust="spacingAndGlyphs">10 km</text>
<text x="1122.5" y="631" text-anchor="middle" textLength="81.2" lengthAdjust="spacingAndGlyphs">from location</text>
<text x="1211.0" y="631" text-anchor="middle" fill="#ff0000" textLength="7.6" lengthAdjust="spacingAndGlyphs">X</text>
<text x="1290.0" y="631" textLength="40.5" lengthAdjust="spacingAndGlyphs">France</text>
<text x="1523.0" y="631" textLength="95.6" lengthAdjust="spacingAndGlyphs">gempa2025lnzz</text>
<text x="44.0" y="655" textLength="170.0" lengthAdjust="spacingAndGlyphs">2025-06-12 10:10:59.081446</text>
<text x="266.5" y="655" text-anchor="middle" textLength="45.6" lengthAdjust="spacingAndGlyphs">3h 38m</text>
<text x="312.0" y="655" textLength="61.7" lengthAdjust="spacingAndGlyphs">suspected</text>
<text x="538.5" y="655" text-anchor="middle" font-weight="bold" textLength="18.4" lengthAdjust="spacingAndGlyphs">2.0</text>
<text x="566.5" y="655" textLength="11.7" lengthAdjust="spacingAndGlyphs">M</text>
<text x="668.0" y="655" text-anchor="middle" textLength="7.4" lengthAdjust="spacingAndGlyphs">7</text>
<text x="740.4" y="655" text-anchor="middle" textLength="18.3" lengthAdjust="spacingAndGlyphs">0.1</text>
<text x="819.4" y="655" text-anchor="middle" textLength="22.2" lengthAdjust="spacingAndGlyphs">305</text>
<text x="923.9" y="655" text-anchor="end" textLength="46.2" lengthAdjust="spacingAndGlyphs">48.47 N</text>
<text x="991.9" y="655" text-anchor="end" textLength="36.2" lengthAdjust="spacingAndGlyphs">9.63 E</text>
<text x="1057.5" y="655" text-anchor="end" textLength="29.8" lengthAdjust="spacingAndGlyphs">5 km</text>
<text x="1122.5" y="655" text-anchor="middle" textLength="81.2" lengthAdjust="spacingAndGlyphs">from location</text>
<text x="1211.0" y="655" text-anchor="middle" fill="#ff0000" textLength="7.6" lengthAdjust="spacingAndGlyphs">X</text>
<text x="1290.0" y="655" textLength="56.0" lengthAdjust="spacingAndGlyphs">Germany</text>
<text x="1523.0" y="655" textLength="96.4" lengthAdjust="spacingAndGlyphs">gempa2025lnzx</text>
<text x="44.0" y="679" textLength="170.0" lengthAdjust="spacingAndGlyphs">2025-06-12 10:06:42.659706</text>
<text x="266.5" y="679" text-anchor="middle" textLength="45.6" lengthAdjust="spacingAndGlyphs">3h 42m</text>
<text x="538.5" y="679" text-anchor="middle" font-weight="bold" textLength="18.4" lengthAdjust="spacingAndGlyphs">1.9</text>
<text x="566.5" y="679" textLength="11.7" lengthAdjust="spacingAndGlyphs">M</text>
<text x="668.0" y="679" text-anchor="middle" textLength="14.8" lengthAdjust="spacingAndGlyphs">38</text>
<text x="740.4" y="679" text-anchor="middle" textLength="18.3" lengthAdjust="spacingAndGlyphs">0.4</text>
<text x="819.4" y="679" text-anchor="middle" textLength="22.2" lengthAdjust="spacingAndGlyphs">239</text>
<text x="923.9" y="679" text-anchor="end" textLength="46.2" lengthAdjust="spacingAndGlyphs">51.70 N</text>
<text x="991.9" y="679" text-anchor="end" textLength="43.6" lengthAdjust="spacingAndGlyphs">11.91 E</text>
<text x="1057.5" y="679" text-anchor="end" textLength="29.8" lengthAdjust="spacingAndGlyphs">6 km</text>
<text x="1122.5" y="679" text-anchor="middle" textLength="81.2" lengthAdjust="spacingAndGlyphs">from location</text>
<text x="1211.0" y="679" text-anchor="middle" fill="#ff0000" textLength="8.2" lengthAdjust="spacingAndGlyphs">C</text>
<text x="1290.0" y="679" textLength="56.0" lengthAdjust="spacingAndGlyphs">Germany</text>
<text x="1523.0" y="679" textLength="97.5" lengthAdjust="spacingAndGlyphs">gempa2025lnzu</text>
<text x="44.0" y="703" textLength="170.0" lengthAdjust="spacingAndGlyphs">2025-06-12 10:06:21.914976</text>
<text x="266.5" y="703" text-anchor="middle" textLength="45.6" lengthAdjust="spacingAndGlyphs">3h 42m</text>
<text x="312.0" y="703" textLength="61.7" lengthAdjust="spacingAndGlyphs">suspected</text>
<text x="538.5" y="703" text-anchor="middle" font-weight="bold" textLength="18.4" lengthAdjust="spacingAndGlyphs">1.6</text>
<text x="566.5" y="703" textLength="11.7" lengthAdjust="spacingAndGlyphs">M</text>
<text x="668.0" y="703" text-anchor="middle" textLength="7.4" lengthAdjust="spacingAndGlyphs">6</text>
<text x="740.4" y="703" text-anchor="middle" textLength="18.3" lengthAdjust="spacingAndGlyphs">0.3</text>
<text x="819.4" y="703" text-anchor="middle" textLength="22.2" lengthAdjust="spacingAndGlyphs">129</text>
<text x="923.9" y="703" text-anchor="end" textLength="46.2" lengthAdjust="spacingAndGlyphs">46.28 N</text>
<text x="991.9" y="703" text-anchor="end" textLength="36.2" lengthAdjust="spacingAndGlyphs">7.07 E</text>
<text x="1057.5" y="703" text-anchor="end" textLength="37.1" lengthAdjust="spacingAndGlyphs">22 km</text>
<text x="1122.5" y="703" text-anchor="middle" textLength="81.2" lengthAdjust="spacingAndGlyphs">from location</text>
<text x="1211.0" y="703" text-anchor="middle" fill="#ff0000" textLength="7.6" lengthAdjust="spacingAndGlyphs">X</text>
<text x="1290.0" y="703" textLength="70.5" lengthAdjust="spacingAndGlyphs">Switzerland</text>
<text x="1523.0" y="703" textLength="94.2" lengthAdjust="spacingAndGlyphs">gempa2025lnzt</text>
<text x="44.0" y="727" textLength="170.0" lengthAdjust="spacingAndGlyphs">2025-06-12 10:06:00.992759</text>
<text x="266.5" y="727" text-anchor="middle" textLength="45.6" lengthAdjust="spacingAndGlyphs">3h 43m</text>
<text x="538.5" y="727" text-anchor="middle" font-weight="bold" textLength="18.4" lengthAdjust="spacingAndGlyphs">3.9</text>
<text x="566.5" y="727" textLength="11.7" lengthAdjust="spacingAndGlyphs">M</text>
<text x="668.0" y="727" text-anchor="middle" textLength="7.4" lengthAdjust="spacingAndGlyphs">9</text>
<text x="740.4" y="727" text-anchor="middle" textLength="18.3" lengthAdjust="spacingAndGlyphs">2.2</text>
<text x="819.4" y="727" text-anchor="middle" textLength="22.2" lengthAdjust="spacingAndGlyphs">142</text>
<text x="923.9" y="727" text-anchor="end" textLength="46.2" lengthAdjust="spacingAndGlyphs">50.74 N</text>
<text x="991.9" y="727" text-anchor="end" textLength="43.6" lengthAdjust="spacingAndGlyphs">18.34 E</text>
<text x="1057.5" y="727" text-anchor="end" textLength="37.1" lengthAdjust="spacingAndGlyphs">10 km</text>
<text x="1122.5" y="727" text-anchor="middle" textLength="4.2" lengthAdjust="spacingAndGlyphs">-</text>
<text x="1211.0" y="727" text-anchor="middle" fill="#ff0000" textLength="8.3" lengthAdjust="spacingAndGlyphs">A</text>
<text x="1290.0" y="727" textLength="42.2" lengthAdjust="spacingAndGlyphs">Poland</text>
<text x="1523.0" y="727" textLength="96.1" lengthAdjust="spacingAndGlyphs">gempa2025lnzv</text>
<text x="44.0" y="751" textLength="170.0" lengthAdjust="spacingAndGlyphs">2025-06-12 10:00:04.796108</text>
<text x="266.5" y="751" text-anchor="middle" textLength="45.6" lengthAdjust="spacingAndGlyphs">3h 49m</text>
<text x="538.5" y="751" text-anchor="middle" font-weight="bold" textLength="18.4" lengthAdjust="spacingAndGlyphs">1.3</text>
<text x="566.5" y="751" textLength="11.7" lengthAdjust="spacingAndGlyphs">M</text>
<text x="668.0" y="751" text-anchor="middle" textLength="14.8" lengthAdjust="spacingAndGlyphs">18</text>
<text x="740.4" y="751" text-anchor="middle" textLength="18.3" lengthAdjust="spacingAndGlyphs">0.1</text>
<text x="819.4" y="751" text-anchor="middle" textLength="22.2" lengthAdjust="spacingAndGlyphs">137</text>
<text x="923.9" y="751" text-anchor="end" textLength="46.2" lengthAdjust="spacingAndGlyphs">50.59 N</text>
<text x="991.9" y="751" text-anchor="end" textLength="43.6" lengthAdjust="spacingAndGlyphs">12.22 E</text>
<text x="1057.5" y="751" text-anchor="end" textLength="29.8" lengthAdjust="spacingAndGlyphs">4 km</text>
<text x="1122.5" y="751" text-anchor="middle" textLength="81.2" lengthAdjust="spacingAndGlyphs">from location</text>
<text x="1211.0" y="751" text-anchor="middle" fill="#ff0000" textLength="8.2" lengthAdjust="spacingAndGlyphs">C</text>
<text x="1290.0" y="751" textLength="56.0" lengthAdjust="spacingAndGlyphs">Germany</text>
<text x="1523.0" y="751" textLength="97.3" lengthAdjust="spacingAndGlyphs">gempa2025lnzo</text>
<text x="44.0" y="775" textLength="170.0" lengthAdjust="spacingAndGlyphs">2025-06-12 09:59:55.444534</text>
<text x="266.5" y="775" text-anchor="middle" textLength="45.6" lengthAdjust="spacingAndGlyphs">3h 49m</text>
<text x="538.5" y="775" text-anchor="middle" font-weight="bold" textLength="18.4" lengthAdjust="spacingAndGlyphs">3.6</text>
<text x="566.5" y="775" textLength="11.7" lengthAdjust="spacingAndGlyphs">M</text>
<text x="668.0" y="775" text-anchor="middle" textLength="7.4" lengthAdjust="spacingAndGlyphs">7</text>
<text x="740.4" y="775" text-anchor="middle" textLength="18.3" lengthAdjust="spacingAndGlyphs">0.3</text>
<text x="819.4" y="775" text-anchor="middle" textLength="22.2" lengthAdjust="spacingAndGlyphs">292</text>
<text x="923.9" y="775" text-anchor="end" textLength="43.5" lengthAdjust="spacingAndGlyphs">23.79 S</text>
<text x="991.9" y="775" text-anchor="end" textLength="48.4" lengthAdjust="spacingAndGlyphs">67.26 W</text>
<text x="1057.5" y="775" text-anchor="end" textLength="44.5" lengthAdjust="spacingAndGlyphs">217 km</text>
<text x="1122.5" y="775" text-anchor="middle" textLength="81.2" lengthAdjust="spacingAndGlyphs">from location</text>
<text x="1211.0" y="775" text-anchor="middle" fill="#ff0000" textLength="8.2" lengthAdjust="spacingAndGlyphs">C</text>
<text x="1290.0" y="775" textLength="185.3" lengthAdjust="spacingAndGlyphs">Chile-Argentina Border Region</text>
<text x="1523.0" y="775" textLength="97.5" lengthAdjust="spacingAndGlyphs">gempa2025lnzp</text>
<text x="44.0" y="799" textLength="170.0" lengthAdjust="spacingAndGlyphs">2025-06-12 09:48:32.140785</text>
<text x="266.5" y="799" text-anchor="middle" textLength="38.2" lengthAdjust="spacingAndGlyphs">4h 0m</text>
<text x="312.0" y="799" textLength="61.7" lengthAdjust="spacingAndGlyphs">suspected</text>
<text x="538.5" y="799" text-anchor="middle" font-weight="bold" textLength="18.4" lengthAdjust="spacingAndGlyphs">3.5</text>
<text x="566.5" y="799" textLength="11.7" lengthAdjust="spacingAndGlyphs">M</text>
<text x="668.0" y="799" text-anchor="middle" textLength="14.8" lengthAdjust="spacingAndGlyphs">14</text>
<text x="740.4" y="799" text-anchor="middle" textLength="18.3" lengthAdjust="spacingAndGlyphs">0.5</text>
<text x="819.4" y="799" text-anchor="middle" textLength="22.2" lengthAdjust="spacingAndGlyphs">265</text>
<text x="923.9" y="799" text-anchor="end" textLength="43.5" lengthAdjust="spacingAndGlyphs">23.33 S</text>
<text x="991.9" y="799" text-anchor="end" textLength="48.4" lengthAdjust="spacingAndGlyphs">69.01 W</text>
<text x="1057.5" y="799" text-anchor="end" textLength="44.5" lengthAdjust="spacingAndGlyphs">154 km</text>
<text x="1122.5" y="799" text-anchor="middle" textLength="81.2" lengthAdjust="spacingAndGlyphs">from location</text>
<text x="1211.0" y="799" text-anchor="middle" fill="#ff0000" textLength="8.2" lengthAdjust="spacingAndGlyphs">C</text>
<text x="1290.0" y="799" textLength="89.8" lengthAdjust="spacingAndGlyphs">Northern Chile</text>
<text x="1523.0" y="799" textLength="96.8" lengthAdjust="spacingAndGlyphs">gempa2025lnze</text>
<text x="44.0" y="823" textLength="170.0" lengthAdjust="spacingAndGlyphs">2025-06-12 09:41:24.622986</text>
<text x="266.5" y="823" text-anchor="middle" textLength="38.2" lengthAdjust="spacingAndGlyphs">4h 7m</text>
<text x="538.5" y="823" text-anchor="middle" font-weight="bold" textLength="18.4" lengthAdjust="spacingAndGlyphs">4.6</text>
<text x="566.5" y="823" textLength="11.7" lengthAdjust="spacingAndGlyphs">M</text>
<text x="668.0" y="823" text-anchor="middle" textLength="14.8" lengthAdjust="spacingAndGlyphs">11</text>
<text x="740.4" y="823" text-anchor="middle" textLength="18.3" lengthAdjust="spacingAndGlyphs">1.4</text>
<text x="819.4" y="823" text-anchor="middle" textLength="22.2" lengthAdjust="spacingAndGlyphs">121</text>
<text x="923.9" y="823" text-anchor="end" textLength="36.1" lengthAdjust="spacingAndGlyphs">2.97 S</text>
<text x="991.9" y="823" text-anchor="end" textLength="51.0" lengthAdjust="spacingAndGlyphs">130.50 E</text>
<text x="1057.5" y="823" text-anchor="end" textLength="37.1" lengthAdjust="spacingAndGlyphs">10 km</text>
<text x="1122.5" y="823" text-anchor="middle" textLength="4.2" lengthAdjust="spacingAndGlyphs">-</text>
<text x="1211.0" y="823" text-anchor="middle" fill="#ff0000" textLength="8.2" lengthAdjust="spacingAndGlyphs">C</text>
<text x="1290.0" y="823" textLength="105.9" lengthAdjust="spacingAndGlyphs">Seram, Indonesia</text>
<text x="1523.0" y="823" textLength="96.6" lengthAdjust="spacingAndGlyphs">gempa2025lnyy</text>
<text x="44.0" y="847" textLength="170.0" lengthAdjust="spacingAndGlyphs">2025-06-12 09:31:38.235047</text>
<text x="266.5" y="847" text-anchor="middle" textLength="45.6" lengthAdjust="spacingAndGlyphs">4h 17m</text>
<text x="538.5" y="847" text-anchor="middle" font-weight="bold" textLength="18.4" lengthAdjust="spacingAndGlyphs">1.8</text>
<text x="566.5" y="847" textLength="11.7" lengthAdjust="spacingAndGlyphs">M</text>
<text x="668.0" y="847" text-anchor="middle" textLength="14.8" lengthAdjust="spacingAndGlyphs">11</text>
<text x="740.4" y="847" text-anchor="middle" textLength="18.3" lengthAdjust="spacingAndGlyphs">0.4</text>
<text x="819.4" y="847" text-anchor="middle" textLength="22.2" lengthAdjust="spacingAndGlyphs">170</text>
<text x="923.9" y="847" text-anchor="end" textLength="43.5" lengthAdjust="spacingAndGlyphs">21.07 S</text>
<text x="991.9" y="847" text-anchor="end" textLength="48.4" lengthAdjust="spacingAndGlyphs">69.28 W</text>
<text x="1057.5" y="847" text-anchor="end" textLength="44.5" lengthAdjust="spacingAndGlyphs">104 km</text>
<text x="1122.5" y="847" text-anchor="middle" textLength="81.2" lengthAdjust="spacingAndGlyphs">from location</text>
<text x="1211.0" y="847" text-anchor="middle" fill="#ff0000" textLength="8.2" lengthAdjust="spacingAndGlyphs">C</text>
<text x="1290.0" y="847" textLength="89.8" lengthAdjust="spacingAndGlyphs">Northern Chile</text>
<text x="1523.0" y="847" textLength="98.0" lengthAdjust="spacingAndGlyphs">gempa2025lnyp</text>
<text x="44.0" y="871" textLength="170.0" lengthAdjust="spacingAndGlyphs">2025-06-12 09:30:38.168539</text>
<text x="266.5" y="871" text-anchor="middle" textLength="45.6" lengthAdjust="spacingAndGlyphs">4h 18m</text>
<text x="538.5" y="871" text-anchor="middle" font-weight="bold" textLength="18.4" lengthAdjust="spacingAndGlyphs">3.0</text>
<text x="566.5" y="871" textLength="11.7" lengthAdjust="spacingAndGlyphs">M</text>
<text x="668.0" y="871" text-anchor="middle" textLength="7.4" lengthAdjust="spacingAndGlyphs">9</text>
<text x="740.4" y="871" text-anchor="middle" textLength="18.3" lengthAdjust="spacingAndGlyphs">0.9</text>
<text x="819.4" y="871" text-anchor="middle" textLength="22.2" lengthAdjust="spacingAndGlyphs">333</text>
<text x="923.9" y="871" text-anchor="end" textLength="43.5" lengthAdjust="spacingAndGlyphs">22.19 S</text>
<text x="991.9" y="871" text-anchor="end" textLength="48.4" lengthAdjust="spacingAndGlyphs">67.44 W</text>
<text x="1057.5" y="871" text-anchor="end" textLength="29.8" lengthAdjust="spacingAndGlyphs">0 km</text>
<text x="1122.5" y="871" text-anchor="middle" textLength="110.8" lengthAdjust="spacingAndGlyphs">operator assigned</text>
<text x="1211.0" y="871" text-anchor="middle" fill="#ff0000" textLength="8.2" lengthAdjust="spacingAndGlyphs">C</text>
<text x="1290.0" y="871" textLength="165.4" lengthAdjust="spacingAndGlyphs">Chile-Bolivia Border Region</text>
<text x="1523.0" y="871" textLength="97.9" lengthAdjust="spacingAndGlyphs">gempa2025lnyo</text>
<text x="44.0" y="895" textLength="170.0" lengthAdjust="spacingAndGlyphs">2025-06-12 09:26:15.575907</text>
<text x="266.5" y="895" text-anchor="middle" textLength="45.6" lengthAdjust="spacingAndGlyphs">4h 22m</text>
<text x="538.5" y="895" text-anchor="middle" font-weight="bold" textLength="18.4" lengthAdjust="spacingAndGlyphs">2.3</text>
<text x="566.5" y="895" textLength="11.7" lengthAdjust="spacingAndGlyphs">M</text>
<text x="668.0" y="895" text-anchor="middle" textLength="7.4" lengthAdjust="spacingAndGlyphs">7</text>
<text x="740.4" y="895" text-anchor="middle" textLength="18.3" lengthAdjust="spacingAndGlyphs">8.1</text>
<text x="819.4" y="895" text-anchor="middle" textLength="22.2" lengthAdjust="spacingAndGlyphs">317</text>
<text x="923.9" y="895" text-anchor="end" textLength="43.5" lengthAdjust="spacingAndGlyphs">22.66 S</text>
<text x="991.9" y="895" text-anchor="end" textLength="48.4" lengthAdjust="spacingAndGlyphs">70.06 W</text>
<text x="1057.5" y="895" text-anchor="end" textLength="29.8" lengthAdjust="spacingAndGlyphs">0 km</text>
<text x="1122.5" y="895" text-anchor="middle" textLength="81.2" lengthAdjust="spacingAndGlyphs">from location</text>
<text x="1211.0" y="895" text-anchor="middle" fill="#008000" textLength="7.8" lengthAdjust="spacingAndGlyphs">P</text>
<text x="1290.0" y="895" textLength="175.9" lengthAdjust="spacingAndGlyphs">Near Coast of Northern Chile</text>
<text x="1523.0" y="895" textLength="93.4" lengthAdjust="spacingAndGlyphs">gempa2025lnyl</text>
<text x="44.0" y="919" textLength="170.0" lengthAdjust="spacingAndGlyphs">2025-06-12 09:13:52.819554</text>
<text x="266.5" y="919" text-anchor="middle" textLength="45.6" lengthAdjust="spacingAndGlyphs">4h 35m</text>
<text x="538.5" y="919" text-anchor="middle" font-weight="bold" textLength="18.4" lengthAdjust="spacingAndGlyphs">2.7</text>
<text x="566.5" y="919" textLength="11.7" lengthAdjust="spacingAndGlyphs">M</text>
<text x="668.0" y="919" text-anchor="middle" textLength="7.4" lengthAdjust="spacingAndGlyphs">8</text>
<text x="740.4" y="919" text-anchor="middle" textLength="18.3" lengthAdjust="spacingAndGlyphs">1.4</text>
<text x="819.4" y="919" text-anchor="middle" textLength="22.2" lengthAdjust="spacingAndGlyphs">319</text>
<text x="923.9" y="919" text-anchor="end" textLength="43.5" lengthAdjust="spacingAndGlyphs">21.68 S</text>
<text x="991.9" y="919" text-anchor="end" textLength="48.4" lengthAdjust="spacingAndGlyphs">68.41 W</text>
<text x="1057.5" y="919" text-anchor="end" textLength="29.8" lengthAdjust="spacingAndGlyphs">2 km</text>
<text x="1122.5" y="919" text-anchor="middle" textLength="81.2" lengthAdjust="spacingAndGlyphs">from location</text>
<text x="1211.0" y="919" text-anchor="middle" fill="#ff0000" textLength="8.2" lengthAdjust="spacingAndGlyphs">C</text>
<text x="1290.0" y="919" textLength="165.4" lengthAdjust="spacingAndGlyphs">Chile-Bolivia Border Region</text>
<text x="1523.0" y="919" textLength="97.3" lengthAdjust="spacingAndGlyphs">gempa2025lnya</text>
<line x1="41" y1="205.5" x2="225" y2="205.5" stroke="#3daee9" stroke-width="1"/>
<rect x="1905.5" y="134.5" width="7" height="160" fill="#b0daf3" stroke="#3daee9" stroke-width="1" rx="3.5"/>
<rect x="40.5" y="936.5" width="72" height="31" fill="none" stroke="#000000" stroke-width="1" rx="3" stroke-opacity="0.06"/>
<rect x="40.5" y="935.5" width="72" height="31" fill="#fcfcfc" stroke="#b8b9ba" stroke-width="1" rx="3"/>
<text x="50.6" y="956" textLength="52.3" lengthAdjust="spacingAndGlyphs">Clear list</text>
<rect x="121.5" y="936.5" width="31" height="31" fill="none" stroke="#000000" stroke-width="1" rx="3" stroke-opacity="0.06"/>
<rect x="121.5" y="935.5" width="31" height="31" fill="#fcfcfc" stroke="#b8b9ba" stroke-width="1" rx="3"/>
<path d="M128,942 L146.2,942 L139.6,950.4 L139.6,960 L134.5,957.5 L134.5,950.4 Z" fill="#000"/>
<text x="723.4" y="956" textLength="59.7" lengthAdjust="spacingAndGlyphs">Last days:</text>
<rect x="790.5" y="936.5" width="49" height="29" fill="#ffffff" stroke="#b8b9ba" stroke-width="1" rx="3"/>
<text x="797.0" y="956" textLength="7.4" lengthAdjust="spacingAndGlyphs">1</text>
<path d="M823.5,948 L829,942.8 L834.5,948" fill="none" stroke="#232629" stroke-width="1.0"/>
<path d="M823.5,953.8 L829,959 L834.5,953.8" fill="none" stroke="#a6a8aa" stroke-width="1.0"/>
<rect x="848.5" y="936.5" width="50" height="31" fill="none" stroke="#000000" stroke-width="1" rx="3" stroke-opacity="0.06"/>
<rect x="848.5" y="935.5" width="50" height="31" fill="#fcfcfc" stroke="#b8b9ba" stroke-width="1" rx="3"/>
<text x="858.6" y="956" textLength="30.5" lengthAdjust="spacingAndGlyphs">Read</text>
<text x="1468.0" y="956" textLength="35.2" lengthAdjust="spacingAndGlyphs">From:</text>
<rect x="1511.5" y="936.5" width="158" height="29" fill="#ffffff" stroke="#b8b9ba" stroke-width="1" rx="3"/>
<text x="1518.3" y="956" textLength="123.5" lengthAdjust="spacingAndGlyphs">2025/06/11 13:45:42</text>
<path d="M1653.5,948.5 L1659,943 L1664.5,948.5" fill="none" stroke="#232629" stroke-width="1.1"/>
<path d="M1653.5,953.5 L1659,959 L1664.5,953.5" fill="none" stroke="#232629" stroke-width="1.1"/>
<text x="1677.0" y="956" textLength="17.6" lengthAdjust="spacingAndGlyphs">To:</text>
<rect x="1702.5" y="936.5" width="158" height="29" fill="#ffffff" stroke="#b8b9ba" stroke-width="1" rx="3"/>
<text x="1709.6" y="956" textLength="123.5" lengthAdjust="spacingAndGlyphs">2025/06/12 13:45:42</text>
<path d="M1844.5,948.5 L1850,943 L1855.5,948.5" fill="none" stroke="#232629" stroke-width="1.1"/>
<path d="M1844.5,953.5 L1850,959 L1855.5,953.5" fill="none" stroke="#232629" stroke-width="1.1"/>
<rect x="1869.5" y="936.5" width="50" height="31" fill="none" stroke="#000000" stroke-width="1" rx="3" stroke-opacity="0.06"/>
<rect x="1869.5" y="935.5" width="50" height="31" fill="#fcfcfc" stroke="#b8b9ba" stroke-width="1" rx="3"/>
<text x="1879.3" y="956" textLength="30.5" lengthAdjust="spacingAndGlyphs">Read</text>
<line x1="39" y1="981.5" x2="1921" y2="981.5" stroke="#c8c9ca" stroke-width="1"/>
<rect x="41.5" y="992.5" width="15" height="15" fill="#c3e3f6" stroke="#3daee9" stroke-width="1" rx="2.5"/>
<path d="M44.6,999.2 L48,1003 L54.5,996.5" fill="none" stroke="#232629" stroke-width="2.1"/>
<text x="63.6" y="1005" textLength="138.5" lengthAdjust="spacingAndGlyphs">Hide other/fake events</text>
<rect x="231.5" y="992.5" width="15" height="15" fill="#ffffff" stroke="#b8b9ba" stroke-width="1" rx="2.5"/>
<text x="253.2" y="1005" textLength="134.1" lengthAdjust="spacingAndGlyphs">Show only own events</text>
<rect x="41.5" y="1027.5" width="15" height="15" fill="#ffffff" stroke="#b8b9ba" stroke-width="1" rx="2.5"/>
<text x="63.6" y="1040" textLength="71.3" lengthAdjust="spacingAndGlyphs">Hide events</text>
<rect x="146.5" y="1021.5" width="80" height="29" fill="none" stroke="#000000" stroke-width="1" rx="3" stroke-opacity="0.06"/>
<rect x="146.5" y="1020.5" width="80" height="29" fill="#fcfcfc" stroke="#b8b9ba" stroke-width="1" rx="3"/>
<text x="152.0" y="1040" textLength="45.3" lengthAdjust="spacingAndGlyphs">outside</text>
<path d="M210.8,1033 L215.8,1038 L220.8,1033" fill="none" stroke="#232629" stroke-width="1.0"/>
<rect x="235.5" y="1021.5" width="94" height="29" fill="none" stroke="#000000" stroke-width="1" rx="3" stroke-opacity="0.06"/>
<rect x="235.5" y="1020.5" width="94" height="29" fill="#fcfcfc" stroke="#b8b9ba" stroke-width="1" rx="3"/>
<text x="241.0" y="1040" textLength="60.0" lengthAdjust="spacingAndGlyphs">- custom -</text>
<path d="M313.3,1033 L318.3,1038 L323.3,1033" fill="none" stroke="#232629" stroke-width="1.0"/>
<rect x="338.5" y="1020.5" width="30" height="31" fill="none" stroke="#000000" stroke-width="1" rx="3" stroke-opacity="0.06"/>
<rect x="338.5" y="1019.5" width="30" height="31" fill="#fcfcfc" stroke="#b8b9ba" stroke-width="1" rx="3"/>
<text x="353.5" y="1040" text-anchor="middle" textLength="10.4" lengthAdjust="spacingAndGlyphs">...</text>
<text x="376.3" y="1040" textLength="39.5" lengthAdjust="spacingAndGlyphs">region</text>
<rect x="432.5" y="1027.5" width="15" height="15" fill="#ffffff" stroke="#b8b9ba" stroke-width="1" rx="2.5"/>
<text x="454.3" y="1040" textLength="93.7" lengthAdjust="spacingAndGlyphs">Hide F/X events</text>
<rect x="577.5" y="1027.5" width="15" height="15" fill="#ffffff" stroke="#b8b9ba" stroke-width="1" rx="2.5"/>
<text x="599.4" y="1040" textLength="99.8" lengthAdjust="spacingAndGlyphs">Hide new events</text>
<path d="M1929.4,1082.6 L1937.3,1090.5 Q1938,1091.5 1937,1092.3 L1932.8,1096.3 Q1931.8,1097 1931,1096.2 L1925,1090.2 Q1924.3,1089.3 1925,1088.5 L1928.2,1082.8 Q1928.8,1082 1929.4,1082.6 Z" fill="#e2e6fc" stroke="#8282d0" stroke-width="0.9"/>
<path d="M1933.4,1086.3 L1927.9,1091.9" fill="none" stroke="#8282d0" stroke-width="0.9"/>
<path d="M1925,1081.3 L1926.8,1084.5 M1937.3,1096.2 L1935,1093" fill="none" stroke="#9aa8e8" stroke-width="1.1"/>
<path d="M1507.3,56.3 L1517.8,67.3 L1515.1,70.2 L1514.8,74.6 L1511,72 L1507.3,71.8 Z" fill="#4a4a4a" stroke="#ffffff" stroke-width="2.4" stroke-linejoin="round" paint-order="stroke"/>
</svg>
</body></html>
